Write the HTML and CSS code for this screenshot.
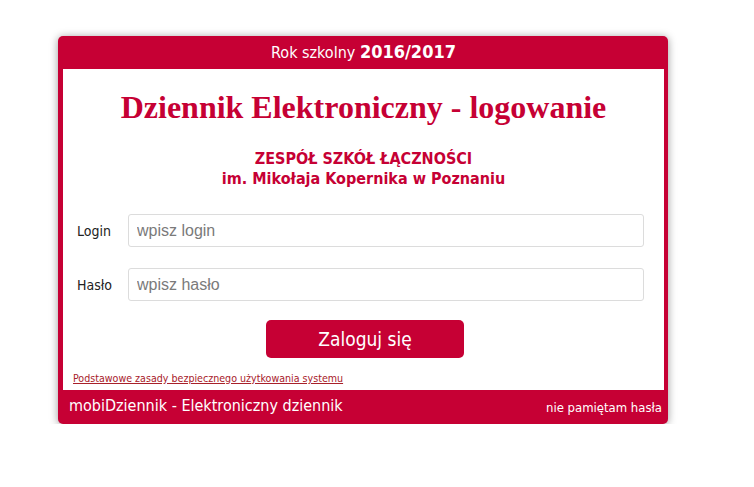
FILE: index.html
```html
<!DOCTYPE html>
<html lang="pl">
<head>
<meta charset="utf-8">
<title>Dziennik Elektroniczny - logowanie</title>
<link rel="stylesheet" href="styles.css">
</head>
<body>
<div class="card">
  <div class="header">Rok szkolny <b>2016/2017</b></div>
  <div class="content">
    <h1 class="title">Dziennik Elektroniczny - logowanie</h1>
    <div class="school">ZESPÓŁ SZKÓŁ ŁĄCZNOŚCI<br>im. Mikołaja Kopernika w Poznaniu</div>
    <form class="form">
      <div class="row">
        <label class="label">Login</label>
        <input class="input" type="text" placeholder="wpisz login">
      </div>
      <div class="row">
        <label class="label">Hasło</label>
        <input class="input" type="password" placeholder="wpisz hasło">
      </div>
      <div class="actions"><button class="btn" type="button">Zaloguj się</button></div>
    </form>
    <a class="rules" href="#">Podstawowe zasady bezpiecznego użytkowania systemu</a>
  </div>
  <div class="footer">
    <span class="brand">mobiDziennik - Elektroniczny dziennik</span>
    <a class="forgot" href="#">nie pamiętam hasła</a>
  </div>
</div>
</body>
</html>
```
FILE: styles.css
```css
html, body {
  margin: 0;
  padding: 0;
  background: #ffffff;
}
body {
  font-family: "DejaVu Sans Condensed", "DejaVu Sans", sans-serif;
}
.card {
  margin: 36px 0 0 58px;
  width: 610px;
  box-sizing: border-box;
  background: #c60034;
  border-radius: 5px;
  padding: 0 4px 0 5px;
  box-shadow: 0 1px 9px rgba(0, 0, 0, 0.4);
}
.header {
  height: 33px;
  line-height: 31px;
  text-align: center;
  color: #fff;
  font-size: 16px;
}
.header b {
  font-size: 18px;
}
.content {
  background: #fff;
  height: 321px;
  box-sizing: border-box;
  padding-top: 20px;
  display: flex;
  flex-direction: column;
}
.title {
  margin: 0;
  text-align: center;
  font-family: "Liberation Serif", serif;
  font-weight: bold;
  font-size: 32px;
  line-height: 36px;
  color: #c60034;
}
.school {
  margin-top: 24px;
  text-align: center;
  font-weight: bold;
  font-size: 16px;
  line-height: 20px;
  color: #c60034;
}
.form {
  margin: 25px 0 0 0;
  display: flex;
  flex-direction: column;
  gap: 21px;
}
.row {
  display: flex;
  align-items: center;
}
.label {
  width: 65px;
  box-sizing: border-box;
  padding-left: 14px;
  font-size: 14px;
  color: #222;
}
.input {
  width: 516px;
  height: 33px;
  box-sizing: border-box;
  border: 1px solid #dcdcdc;
  border-radius: 3px;
  padding: 0 8px;
  font-family: "Liberation Sans", Arial, sans-serif;
  font-size: 16px;
  color: #333;
}
.input::placeholder {
  color: #7a7a7a;
}
.actions {
  display: flex;
  padding-left: 203px;
  margin-top: -2px;
}
.btn {
  width: 198px;
  height: 38px;
  border: 0;
  border-radius: 5px;
  background: #c60034;
  color: #fff;
  font-family: "DejaVu Sans Condensed", "DejaVu Sans", sans-serif;
  font-size: 19px;
  padding: 0;
}
.rules {
  margin: 14px 0 0 10px;
  font-size: 10.6px;
  color: #a8202a;
  align-self: flex-start;
}
.footer {
  height: 34px;
  margin: 0 -4px 0 -5px;
  padding: 0 6px 0 11px;
  display: flex;
  justify-content: space-between;
  align-items: center;
  color: #fff;
}
.brand {
  font-size: 16px;
  padding-bottom: 4px;
}
.forgot {
  font-size: 13px;
  color: #fff;
  text-decoration: none;
  padding-top: 0;
}
```
